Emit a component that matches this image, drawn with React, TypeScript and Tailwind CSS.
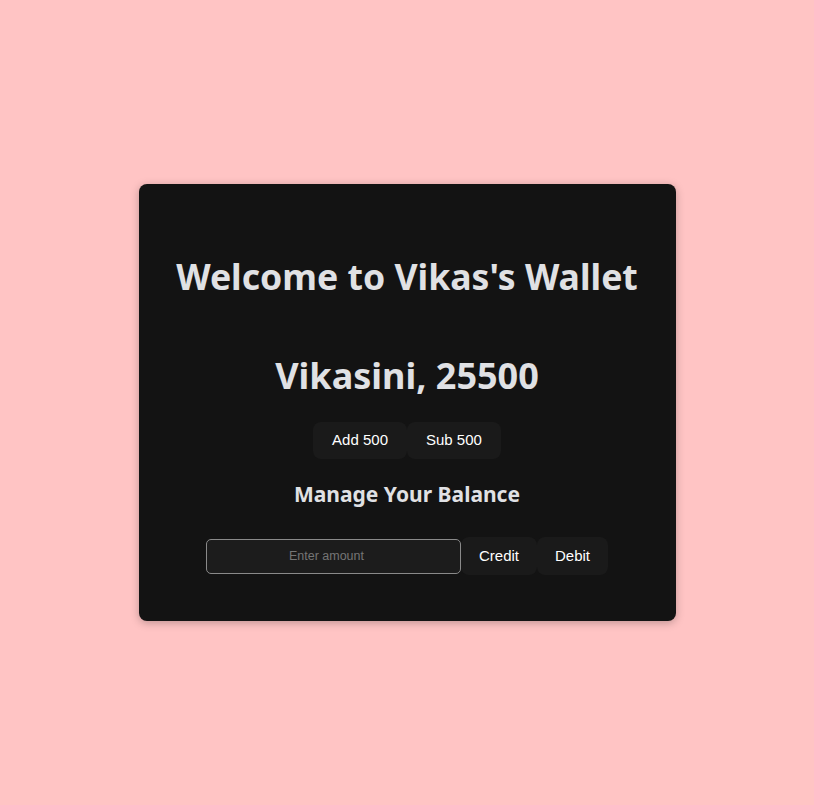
export default function App() {
  return (
    <div className="min-h-screen bg-[#ffc4c4] flex items-center justify-center">
      <div className="w-[537px] bg-[#131313] rounded-lg shadow-[0_2px_8px_rgba(0,0,0,0.25)] pt-[71px] pb-[46px] flex flex-col items-center">
        <h1 className="text-[35.6px] leading-[43px] font-bold text-[#e0e1e4] font-['Noto_Sans',sans-serif]">
          Welcome to Vikas's Wallet
        </h1>
        <h2 className="mt-[56px] text-[36px] leading-[43px] font-bold text-[#e0e1e4] font-['Noto_Sans',sans-serif]">
          Vikasini, 25500
        </h2>
        <div className="mt-[25px] flex font-['Liberation_Sans',Arial,sans-serif] text-[15px] text-white">
          <button className="h-[37px] px-[19px] bg-[#1a1a1a] rounded-lg">Add 500</button>
          <button className="h-[37px] px-[19px] bg-[#1a1a1a] rounded-lg">Sub 500</button>
        </div>
        <h3 className="mt-[23px] text-[21px] leading-[25px] font-bold text-[#e0e1e4] font-['Noto_Sans',sans-serif]">
          Manage Your Balance
        </h3>
        <div className="mt-[30px] flex items-center font-['Liberation_Sans',Arial,sans-serif] text-[15px] text-white">
          <input
            type="text"
            placeholder="Enter amount"
            className="w-[255px] h-[35px] pr-[14px] bg-[#1c1c1c] border border-[#8a8a8a] rounded-[5px] text-center text-[12.5px] placeholder:text-[#757575] outline-none"
          />
          <button className="h-[38px] px-[18px] bg-[#1a1a1a] rounded-lg">Credit</button>
          <button className="h-[38px] px-[18px] bg-[#1a1a1a] rounded-lg">Debit</button>
        </div>
      </div>
    </div>
  )
}
